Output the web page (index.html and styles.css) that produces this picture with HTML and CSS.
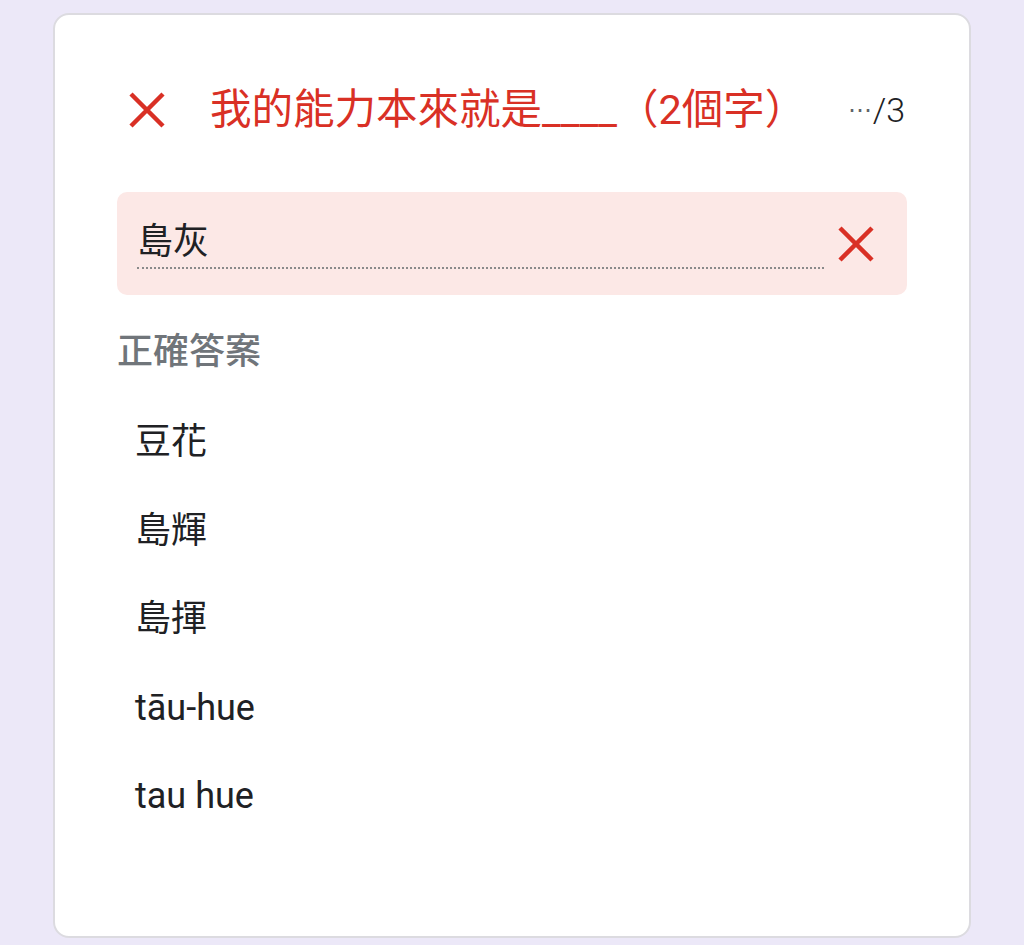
FILE: index.html
```html
<!DOCTYPE html>
<html lang="zh-Hant">
<head>
<meta charset="utf-8">
<link rel="stylesheet" href="styles.css">
</head>
<body>
<div class="card">
  <div class="header">
    <svg class="icon-x head-x" viewBox="0 0 38 38"><path d="M3 3 L35 35 M35 3 L3 35" stroke="#d93025" stroke-width="4.5" fill="none"/></svg>
    <div class="title">我的能力本來就是____（2個字）</div>
    <div class="count"><span class="dots">⋯</span>/3</div>
  </div>
  <div class="answer-box">
    <div class="field">島灰</div>
    <svg class="icon-x box-x" viewBox="0 0 36 36"><path d="M2 2 L34 34 M34 2 L2 34" stroke="#d93025" stroke-width="4.5" fill="none"/></svg>
  </div>
  <div class="section-title">正確答案</div>
  <ul class="answers">
    <li>豆花</li>
    <li>島輝</li>
    <li>島揮</li>
    <li>tāu-hue</li>
    <li>tau hue</li>
  </ul>
</div>
</body>
</html>
```
FILE: styles.css
```css
html, body {
  margin: 0;
  padding: 0;
}
body {
  background: #ece8f8;
  font-family: "Roboto", "Noto Sans CJK TC", sans-serif;
  width: 1024px;
  height: 945px;
  overflow: hidden;
}
.card {
  box-sizing: border-box;
  margin: 13px 0 0 53px;
  width: 918px;
  height: 925px;
  background: #ffffff;
  border: 2px solid #dcdbe0;
  border-radius: 16px;
  padding: 65px 62px 0 62px;
}
.header {
  display: flex;
  align-items: center;
  height: 60px;
}
.head-x {
  width: 38px;
  height: 38px;
  margin-left: 11px;
  flex: none;
}
.title {
  margin-left: 44px;
  color: #d93025;
  font-size: 41.5px;
  line-height: 60px;
  white-space: nowrap;
}
.count {
  margin-left: auto;
  margin-right: 2px;
  font-size: 34px;
  font-weight: 300;
  color: #202124;
  line-height: 60px;
}
.dots {
  font-family: "DejaVu Sans", sans-serif;
  font-size: 24px;
  color: #5f6368;
  margin-right: 1px;
  vertical-align: 4px;
}
.answer-box {
  margin-top: 52px;
  height: 103px;
  box-sizing: border-box;
  background: #fce8e6;
  border-radius: 10px;
  display: flex;
  align-items: center;
  padding: 0 33px 0 20px;
}
.field {
  flex: 1;
  font-size: 36px;
  line-height: 48px;
  color: #202124;
  border-bottom: 2px dotted #8a8a8a;
  padding-bottom: 1px;
}
.box-x {
  width: 36px;
  height: 36px;
  margin-left: 14px;
  flex: none;
}
.section-title {
  margin-top: 31px;
  font-size: 36px;
  line-height: 52px;
  color: #70757a;
  font-weight: 500;
}
.answers {
  list-style: none;
  margin: 20px 0 0 0;
  padding: 0 0 0 18px;
}
.answers li {
  height: 88.5px;
  line-height: 88.5px;
  font-size: 36px;
  color: #202124;
}
```
